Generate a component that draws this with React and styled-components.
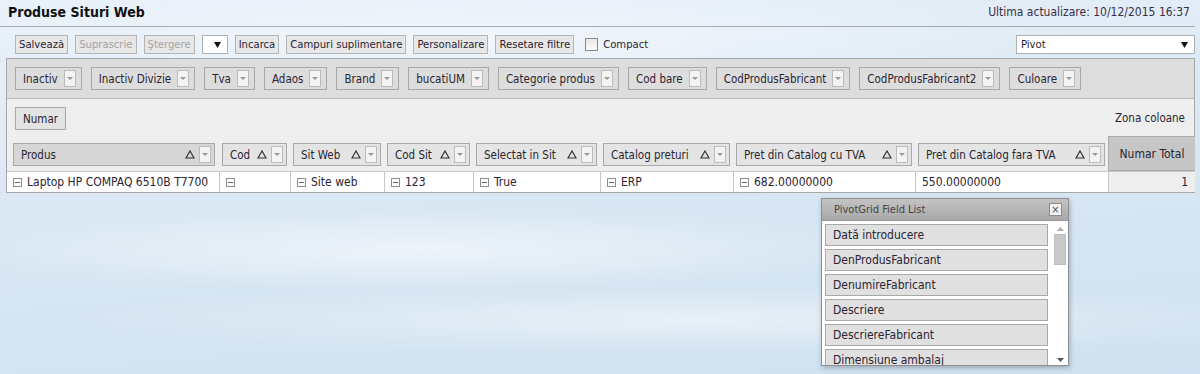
import styled, { createGlobalStyle } from "styled-components";

const GlobalStyle = createGlobalStyle`
  html, body {
    margin: 0;
    height: 100%;
  }
  body {
    font-family: "DejaVu Sans Condensed", "DejaVu Sans", sans-serif;
    font-size: 11.5px;
    color: #2a2433;
    overflow: hidden;
    background:
      radial-gradient(ellipse 700px 60px at 420px 250px, rgba(255, 255, 255, 0.55), transparent 70%),
      radial-gradient(ellipse 900px 50px at 700px 320px, rgba(255, 255, 255, 0.45), transparent 70%),
      radial-gradient(ellipse 800px 80px at 500px 40px, rgba(255, 255, 255, 0.5), transparent 70%),
      linear-gradient(175deg, #e9f1f9 0%, #dae8f4 45%, #cfe1f0 100%);
  }
`;

const Page = styled.div`
  position: relative;
  width: 1195px;
  height: 374px;
`;

const TopBar = styled.div`
  display: flex;
  justify-content: space-between;
  align-items: flex-start;
  height: 26px;
  border-bottom: 1px solid #a9adb3;
  box-sizing: content-box;
`;

const Title = styled.h1`
  margin: 0;
  padding: 3px 0 0 8px;
  font-size: 14px;
  font-weight: bold;
  line-height: 18px;
  color: #111;
`;

const Updated = styled.div`
  padding: 5px 5px 0 0;
  font-size: 12px;
  line-height: 14px;
  color: #3a2f48;
`;

const Toolbar = styled.div`
  display: flex;
  align-items: flex-start;
  justify-content: space-between;
  height: 31px;
  padding: 8px 0 0 15px;
  box-sizing: border-box;
  font-size: 11.2px;
`;

const ToolGroup = styled.div`
  display: flex;
  align-items: center;
  gap: 7px;
`;

const ToolButton = styled.button`
  height: 19px;
  padding: 0 3px;
  font: inherit;
  line-height: 17px;
  color: ${(p) => (p.disabled ? "#a3a3a3" : "#2a2433")};
  background: #e7e7e7;
  border: 1px solid #b5b5b5;
  border-radius: 0;
`;

const MiniSelect = styled.div`
  display: flex;
  align-items: center;
  justify-content: ${(p) => (p.$wide ? "space-between" : "flex-end")};
  box-sizing: border-box;
  width: ${(p) => (p.$wide ? "179px" : "26px")};
  height: 19px;
  padding: 0 6px 0 4px;
  background: #fff;
  border: 1px solid #b0b0b0;
`;

const Check = styled.span`
  display: inline-block;
  width: 11px;
  height: 11px;
  margin-left: 4px;
  border: 1px solid #8a8a8a;
  background: linear-gradient(#e8e8e8, #fbfbfb);
`;

const CheckLabel = styled.span`
  margin-left: -2px;
`;

const Panel = styled.div`
  margin-left: 6px;
  border: 1px solid #a8a8a8;
  background: #eeeeee;
`;

const FilterZone = styled.div`
  display: flex;
  gap: 9px;
  height: 40px;
  padding: 8px 0 0 8px;
  box-sizing: border-box;
  background: #dddddd;
  border-bottom: 1px solid #b9b9b9;
`;

const FieldBox = styled.div`
  display: flex;
  align-items: center;
  gap: 6px;
  box-sizing: border-box;
  height: 23px;
  padding: 0 5px 0 7px;
  border: 1px solid #a9a9a9;
  background: ${(p) => p.$bg || "transparent"};
  white-space: nowrap;
`;

const DataButton = styled(FieldBox)`
  display: inline-flex;
  padding: 0 7px;
  background: #e3e3e3;
`;

const DropBtn = styled.span`
  display: flex;
  align-items: center;
  justify-content: center;
  box-sizing: border-box;
  width: 12px;
  height: 17px;
  border: 1px solid #bcbcbc;
  background: #f3f3f3;
`;

const Grid = styled.div`
  display: grid;
  grid-template-columns: 212px 71px 94px 89px 127px 133px 182px 193px 87px;
  grid-template-rows: 37px 35px 21px;
`;

const DataArea = styled.div`
  grid-column: 1 / 9;
  padding: 8px 0 0 8px;
`;

const ColumnZone = styled.div`
  display: flex;
  justify-content: flex-end;
  align-items: center;
  padding-right: 10px;
  white-space: nowrap;
`;

const HeaderCell = styled(FieldBox)`
  margin: 7px ${(p) => (p.$first ? "4px" : "3px")} 0 ${(p) => (p.$first ? "6px" : "3px")};
  padding: 0 3px 0 7px;
  gap: 4px;
`;

const HeaderText = styled.span`
  flex: 1;
  overflow: hidden;
`;

const TotalHead = styled.div`
  display: flex;
  align-items: center;
  justify-content: center;
  font-size: 12px;
  background: #c6c6c6;
  border: 1px solid #acacac;
  border-right: none;
  white-space: nowrap;
`;

const DataCell = styled.div`
  display: flex;
  align-items: center;
  gap: 5px;
  padding: 0 6px;
  font-size: 12px;
  background: #fff;
  border-top: 1px solid #c8c8c8;
  border-left: ${(p) => (p.$first ? "none" : "1px solid #c8c8c8")};
  white-space: nowrap;
`;

const TotalCell = styled(DataCell)`
  justify-content: flex-end;
  background: #eeeeee;
  padding-right: 7px;
`;

const Expand = styled.span`
  position: relative;
  display: inline-block;
  flex: none;
  box-sizing: border-box;
  width: 9px;
  height: 9px;
  border: 1px solid #8d8d8d;
  background: #fff;
  &::after {
    content: "";
    position: absolute;
    left: 1px;
    right: 1px;
    top: 3px;
    height: 1px;
    background: #666;
  }
`;

const FieldList = styled.div`
  position: absolute;
  left: 821px;
  top: 198px;
  width: 248px;
  height: 168px;
  box-sizing: border-box;
  border: 1px solid #8f8f8f;
  background: #fff;
  box-shadow: 1px 2px 5px rgba(0, 0, 0, 0.25);
  overflow: hidden;
`;

const ListHead = styled.div`
  display: flex;
  align-items: center;
  justify-content: space-between;
  height: 21px;
  padding: 0 6px 0 12px;
  font-size: 11px;
  background: linear-gradient(#c3c3c3, #a9a9a9);
  border-bottom: 1px solid #949494;
  color: #444;
`;

const CloseBtn = styled.span`
  display: flex;
  align-items: center;
  justify-content: center;
  width: 11px;
  height: 11px;
  border: 1px solid #8c8c8c;
  background: #f1f1f1;
  color: #555;
  font-size: 11px;
  line-height: 1;
`;

const ListBody = styled.div`
  display: flex;
  height: 146px;
`;

const Items = styled.div`
  display: flex;
  flex-direction: column;
  gap: 3px;
  width: 223px;
  padding: 3px 0 0 3px;
`;

const Item = styled.div`
  flex: none;
  box-sizing: border-box;
  height: 22px;
  padding: 0 7px;
  font-size: 12px;
  line-height: 20px;
  border: 1px solid #a8a8a8;
  background: #e0e0e0;
  white-space: nowrap;
`;

const ScrollBar = styled.div`
  display: flex;
  flex-direction: column;
  align-items: center;
  width: 14px;
  margin-left: 5px;
  padding: 6px 0 5px;
`;

const Thumb = styled.div`
  width: 12px;
  height: 31px;
  margin-top: 3px;
  background: #c9c9c9;
  border: 1px solid #bdbdbd;
  box-sizing: border-box;
`;

const Spacer = styled.div`
  flex: 1;
`;

function Tri({ color = "#999", w = 6, h = 3, up = false }) {
  return (
    <svg width={w} height={h} viewBox={`0 0 ${w} ${h}`}>
      <polygon
        points={up ? `0,${h} ${w},${h} ${w / 2},0` : `0,0 ${w},0 ${w / 2},${h}`}
        fill={color}
      />
    </svg>
  );
}

function SortIcon() {
  return (
    <svg width="10" height="9" viewBox="0 0 10 9">
      <polygon points="5,1 9,8 1,8" fill="none" stroke="#333" strokeWidth="1.2" />
    </svg>
  );
}

const filters = [
  "Inactiv",
  "Inactiv Divizie",
  "Tva",
  "Adaos",
  "Brand",
  "bucatiUM",
  "Categorie produs",
  "Cod bare",
  "CodProdusFabricant",
  "CodProdusFabricant2",
  "Culoare",
];

const headers = [
  "Produs",
  "Cod",
  "Sit Web",
  "Cod Sit",
  "Selectat in Sit",
  "Catalog preturi",
  "Pret din Catalog cu TVA",
  "Pret din Catalog fara TVA",
];

const row = [
  { text: "Laptop HP COMPAQ 6510B T7700", exp: true },
  { text: "", exp: true },
  { text: "Site web", exp: true },
  { text: "123", exp: true },
  { text: "True", exp: true },
  { text: "ERP", exp: true },
  { text: "682.00000000", exp: true },
  { text: "550.00000000", exp: false },
];

const fields = [
  "Dată introducere",
  "DenProdusFabricant",
  "DenumireFabricant",
  "Descriere",
  "DescriereFabricant",
  "Dimensiune ambalaj",
];

export default function App() {
  return (
    <Page>
      <GlobalStyle />
      <TopBar>
        <Title>Produse Situri Web</Title>
        <Updated>Ultima actualizare: 10/12/2015 16:37</Updated>
      </TopBar>

      <Toolbar>
        <ToolGroup>
          <ToolButton>Salvează</ToolButton>
          <ToolButton disabled>Suprascrie</ToolButton>
          <ToolButton disabled>Ştergere</ToolButton>
          <MiniSelect>
            <Tri color="#111" w={7} h={6} />
          </MiniSelect>
          <ToolButton>Incarca</ToolButton>
          <ToolButton>Campuri suplimentare</ToolButton>
          <ToolButton>Personalizare</ToolButton>
          <ToolButton>Resetare filtre</ToolButton>
          <Check />
          <CheckLabel>Compact</CheckLabel>
        </ToolGroup>
        <MiniSelect $wide>
          <span>Pivot</span>
          <Tri color="#111" w={7} h={6} />
        </MiniSelect>
      </Toolbar>

      <Panel>
        <FilterZone>
          {filters.map((f) => (
            <FieldBox key={f}>
              {f}
              <DropBtn>
                <Tri />
              </DropBtn>
            </FieldBox>
          ))}
        </FilterZone>

        <Grid>
          <DataArea>
            <DataButton as="span">Numar</DataButton>
          </DataArea>
          <ColumnZone>Zona coloane</ColumnZone>

          {headers.map((h, i) => (
            <HeaderCell key={h} $first={i === 0} $bg={i === 0 ? "#d6d6d6" : "#e4e4e4"}>
              <HeaderText>{h}</HeaderText>
              <SortIcon />
              <DropBtn>
                <Tri />
              </DropBtn>
            </HeaderCell>
          ))}
          <TotalHead>Numar Total</TotalHead>

          {row.map((c, i) => (
            <DataCell key={i} $first={i === 0}>
              {c.exp && <Expand />}
              {c.text}
            </DataCell>
          ))}
          <TotalCell>1</TotalCell>
        </Grid>
      </Panel>

      <FieldList>
        <ListHead>
          <span>PivotGrid Field List</span>
          <CloseBtn>×</CloseBtn>
        </ListHead>
        <ListBody>
          <Items>
            {fields.map((f) => (
              <Item key={f}>{f}</Item>
            ))}
          </Items>
          <ScrollBar>
            <Tri color="#aaa" w={7} h={4} up />
            <Thumb />
            <Spacer />
            <Tri color="#555" w={7} h={4} />
          </ScrollBar>
        </ListBody>
      </FieldList>
    </Page>
  );
}
